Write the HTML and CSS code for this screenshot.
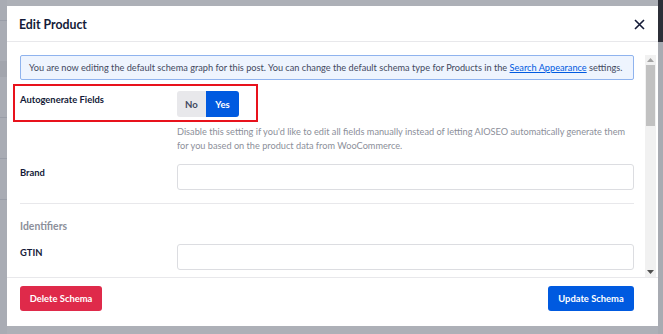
FILE: index.html
```html
<!DOCTYPE html>
<html>
<head>
<meta charset="utf-8">
<link rel="stylesheet" href="styles.css">
</head>
<body>
<div class="backdrop">
  <div class="bg-left">
    <div class="band b1"></div>
    <div class="band b2"></div>
    <div class="band b3"></div>
    <div class="band b4"></div>
    <div class="band b5"></div>
  </div>
  <div class="bg-right">
    <div class="bg-dark"></div>
  </div>
</div>

<div class="modal">
  <div class="modal-header">
    <h2 class="modal-title">Edit Product</h2>
    <button class="close" aria-label="Close">
      <svg width="11" height="11" viewBox="0 0 11 11"><path d="M1 1L10 10M10 1L1 10" stroke="#141b38" stroke-width="1.6" fill="none"/></svg>
    </button>
  </div>
  <div class="modal-body">
    <div class="scroll-content">
      <div class="notice">You are now editing the default schema graph for this post. You can change the default schema type for Products in the&nbsp;<a href="#">Search Appearance</a>&nbsp;settings.</div>

      <div class="row row-auto">
        <div class="highlight"></div>
        <div class="label">Autogenerate Fields</div>
        <div class="field">
          <div class="toggle">
            <span class="opt opt-no">No</span>
            <span class="opt opt-yes">Yes</span>
          </div>
          <p class="desc">Disable this setting if you'd like to edit all fields manually instead of letting AIOSEO automatically generate them for you based on the product data from WooCommerce.</p>
        </div>
      </div>

      <div class="row">
        <div class="label">Brand</div>
        <div class="field"><div class="input"></div></div>
      </div>

      <div class="divider"></div>

      <div class="section-title">Identifiers</div>

      <div class="row">
        <div class="label">GTIN</div>
        <div class="field"><div class="input"></div></div>
      </div>

      <div class="divider"></div>
    </div>
    <div class="scrollbar">
      <div class="sb-btn"><svg width="7" height="4" viewBox="0 0 7 4"><path d="M0 4L3.5 0L7 4Z" fill="#a3a3a3"/></svg></div>
      <div class="sb-track"><div class="sb-thumb"></div></div>
      <div class="sb-btn"><svg width="7" height="4" viewBox="0 0 7 4"><path d="M0 0L3.5 4L7 0Z" fill="#505050"/></svg></div>
    </div>
  </div>
  <div class="modal-footer">
    <button class="btn btn-red">Delete Schema</button>
    <button class="btn btn-blue">Update Schema</button>
  </div>
</div>
</body>
</html>
```

FILE: styles.css
```css
* { box-sizing: border-box; }
html, body { margin: 0; padding: 0; }
body {
  width: 663px;
  height: 334px;
  overflow: hidden;
  font-family: Lato, "Liberation Sans", sans-serif;
  background: #adb0b7;
}
.backdrop {
  width: 663px;
  height: 334px;
  display: flex;
  justify-content: space-between;
}
.bg-left {
  width: 7px;
  height: 334px;
  background: #a9acb4;
  display: flex;
  flex-direction: column;
  padding-top: 20px;
  gap: 40px;
}
.band { height: 1px; background: #9a9ea8; }
.b2 { height: 16px; background: #a2a5ad; }
.bg-right {
  width: 5px;
  height: 334px;
  background: #a8abb2;
}
.bg-dark {
  height: 42px;
  background: #2c2f38;
}

.modal {
  position: fixed;
  left: 7px;
  top: 6px;
  width: 651px;
  height: 320px;
  background: #fff;
  display: flex;
  flex-direction: column;
  color: #141b38;
}
.modal-header {
  height: 36px;
  flex: none;
  display: flex;
  align-items: center;
  justify-content: space-between;
  padding: 2px 12px 0 12px;
  border-bottom: 1px solid #e8e8eb;
}
.modal-title {
  margin: 0;
  font-size: 12.3px;
  font-weight: 700;
  color: #141b38;
}
.close {
  border: 0;
  background: none;
  padding: 0;
  width: 11px;
  height: 11px;
  display: flex;
  margin-right: 1px;
}
.modal-body {
  flex: none;
  height: 236px;
  padding-top: 13px;
  display: flex;
  border-bottom: 1px solid #e8e8eb;
}
.scroll-content {
  flex: 1;
  overflow: hidden;
  padding: 0 11px 0 13px;
}
.notice {
  height: 25px;
  border: 1px solid #8fb3ee;
  background: #eef4fe;
  border-radius: 2px;
  font-size: 9.2px;
  color: #434960;
  display: flex;
  align-items: center;
  padding-left: 8px;
  white-space: nowrap;
}
.notice a { color: #005ae0; text-decoration: underline; }
.row {
  display: flex;
  margin-top: 11px;
}
.row-auto { position: relative; }
.highlight {
  position: absolute;
  left: -7px;
  top: -7px;
  width: 245px;
  height: 38px;
  border: 2px solid #e8121c;
}
.label {
  width: 157px;
  flex: none;
  font-size: 9.4px;
  font-weight: 700;
  line-height: 17px;
  color: #141b38;
}
.field { flex: 1; }
.toggle {
  display: inline-flex;
  height: 26px;
  border-radius: 3px;
  overflow: hidden;
}
.opt {
  display: flex;
  align-items: center;
  justify-content: center;
  font-size: 9.6px;
  font-weight: 700;
}
.opt-no { width: 29px; background: #e8e8eb; color: #434960; }
.opt-yes { width: 33px; background: #005ae0; color: #fff; }
.desc {
  margin: 8px 0 0 0;
  font-size: 9.2px;
  line-height: 14px;
  color: #8c8f9a;
}
.input {
  height: 26px;
  border: 1px solid #dcdde1;
  border-radius: 3px;
  background: #fff;
}
.divider {
  height: 1px;
  background: #e8e8eb;
  margin-top: 13px;
}
.section-title {
  margin-top: 14px;
  font-size: 10.4px;
  font-weight: 700;
  line-height: 16px;
  color: #8c8f9a;
}
.section-title + .row { margin-top: 10px; }
.scrollbar {
  width: 11px;
  margin-right: 2px;
  background: #f1f1f1;
  display: flex;
  flex-direction: column;
}
.sb-btn {
  height: 10px;
  display: flex;
  align-items: center;
  justify-content: center;
  flex: none;
}
.sb-track { flex: 1; }
.sb-thumb {
  margin: 0 1px;
  height: 61px;
  background: #c1c1c1;
}
.modal-footer {
  flex: 1;
  display: flex;
  justify-content: space-between;
  align-items: flex-start;
  padding: 8px 24px 0 13px;
}
.btn {
  height: 25px;
  border: 0;
  border-radius: 3px;
  color: #fff;
  font-family: inherit;
  font-size: 9.4px;
  font-weight: 700;
  padding: 0;
}
.btn-red { width: 82px; background: #df2a4a; }
.btn-blue { width: 86px; background: #005ae0; }
```
